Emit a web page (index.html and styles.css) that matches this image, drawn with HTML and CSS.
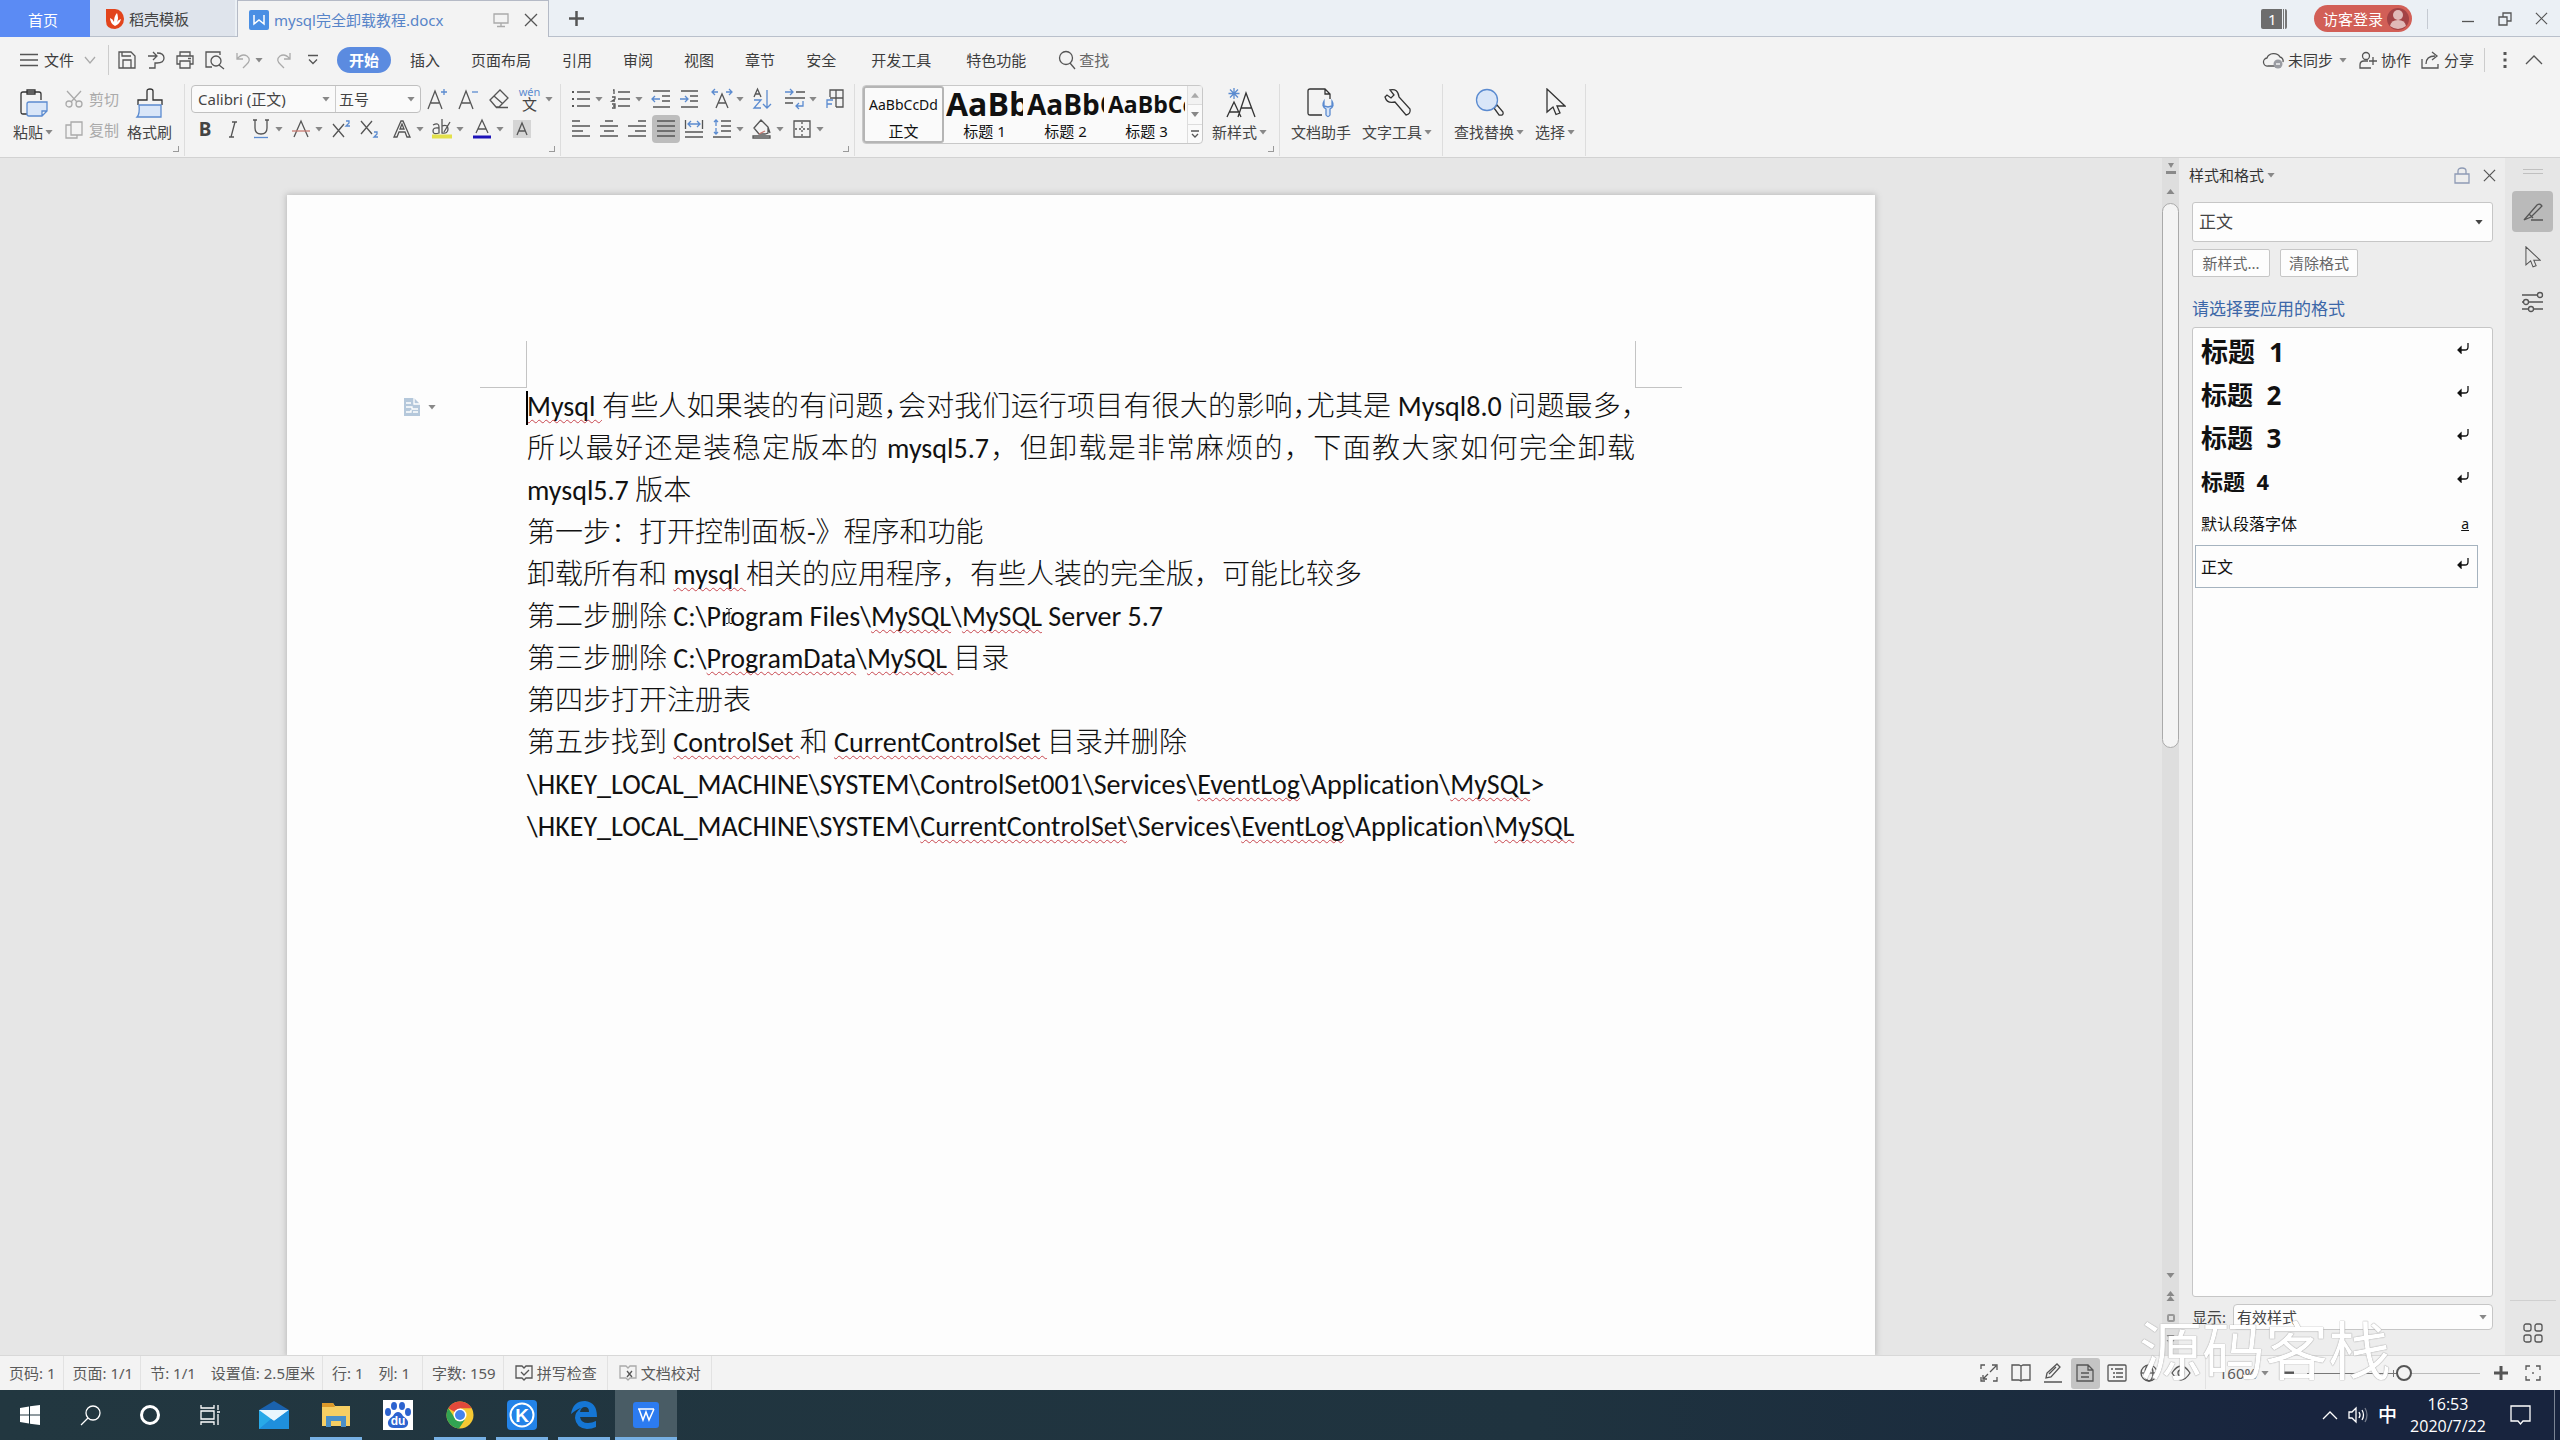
FILE: index.html
```html
<!DOCTYPE html>
<html lang="zh-CN">
<head>
<meta charset="utf-8">
<title>mysql完全卸载教程.docx</title>
<link rel="stylesheet" href="styles.css">
</head>
<body>
<svg class="defs" aria-hidden="true">
  <symbol id="x" viewBox="0 0 14 14"><path d="M1 1l12 12M13 1L1 13"/></symbol>
  <symbol id="ret" viewBox="0 0 12 12"><path d="M11 1v4q0 3-3 3H2" fill="none"/><path d="M4 5L1 8l3 3z" fill="#111"/></symbol>
  <symbol id="arrow" viewBox="0 0 20 28"><path d="M1 1v23l6-5 3 7.500 4-1.500-3-7h8z"/></symbol>
</svg>

<header class="titlebar">
  <button class="home-tab">首页</button>
  <button class="doc-tab shell">
    <svg class="plain" width="18" height="20" viewBox="0 0 18 20"><path d="M0 0h9a9 10 0 0 1 0 20q-9 0-9-8z" fill="#e2441c"/><path d="M9 17q-5-3-5-8 3 1 4 4 0-6 3-9 2 5 0 9 1-2 4-3-1 5-6 7z" fill="#fff"/></svg>
    <span>稻壳模板</span>
  </button>
  <div class="doc-tab active">
    <svg class="plain" width="20" height="20" viewBox="0 0 20 20"><rect width="20" height="20" rx="2" fill="#4a8fe4"/><path d="M5 5v9l5-4 5 4V5" fill="none" stroke="#fff" stroke-width="1.500"/></svg>
    <span class="doc-name">mysql完全卸载教程.docx</span>
    <button class="bare faint" aria-label="窗口"><svg width="16" height="16" viewBox="0 0 16 16"><path d="M1 2h14v9H1zM8 11v3M4 14.500h8"/></svg></button>
    <button class="bare" aria-label="关闭"><svg width="14" height="14"><use href="#x"/></svg></button>
  </div>
  <button class="bare plus" aria-label="新建"><svg width="15" height="15" viewBox="0 0 15 15"><path d="M7.500 0v15M0 7.500h15" stroke-width="2.500"/></svg></button>
  <div class="window-tools">
    <span class="count">1</span>
    <button class="login">访客登录
      <svg class="plain" width="22" height="22" viewBox="0 0 22 22"><circle cx="11" cy="11" r="11" fill="#a34245"/><circle cx="11" cy="7" r="5" fill="#e0b9b8"/><path d="M3 18q1-6 8-6t8 6q-8 6-16 0z" fill="#e0b9b8"/></svg>
    </button>
    <div class="win-buttons">
      <button class="bare" aria-label="最小化"><svg width="14" height="14" viewBox="0 0 14 14"><path d="M1 9.500h12"/></svg></button>
      <button class="bare" aria-label="还原"><svg width="14" height="14" viewBox="0 0 14 14"><path d="M1 5h8v8H1zM5 5V1h8v8H9"/></svg></button>
      <button class="bare" aria-label="关闭窗口"><svg width="13" height="13"><use href="#x"/></svg></button>
    </div>
  </div>
</header>

<nav class="menubar">
  <button class="file"><svg width="18" height="14" viewBox="0 0 18 14"><path d="M0 1.500h18M0 7h18M0 12.500h18"/></svg>文件<svg class="faint" width="12" height="8" viewBox="0 0 12 8"><path d="M1 1l5 6 5-6"/></svg></button>
  <div class="quick">
    <button class="bare" aria-label="保存"><svg width="18" height="18" viewBox="0 0 18 18"><path d="M1 17V1h12l4 4v12zM4 1v4h9M5 17V9h8v8"/></svg></button>
    <button class="bare" aria-label="输出"><svg width="18" height="18" viewBox="0 0 18 18"><path d="M1 5h8M6 1l4 4-4 4M10 2q7 0 7 5t-7 5H8v5H2"/></svg></button>
    <button class="bare" aria-label="打印"><svg width="18" height="18" viewBox="0 0 18 18"><path d="M4 5V1h10v4M4 13H1V5h16v8h-3M4 10h10v7H4zM12 7.500h3"/></svg></button>
    <button class="bare" aria-label="打印预览"><svg width="20" height="18" viewBox="0 0 20 18"><path d="M7 16H1V1h14v3M14 14l5 4"/><circle cx="11" cy="10" r="5"/></svg></button>
    <button class="bare pair faint" aria-label="撤销"><svg width="15" height="16" viewBox="0 0 15 16"><path d="M1 1v6h6M1 7q5-6 10-3 5 4-1 9l-3 3"/></svg><i class="caret"></i></button>
    <button class="bare faint" aria-label="恢复"><svg width="15" height="16" viewBox="0 0 15 16"><path d="M14 1v6H8M14 7Q9 1 4 4q-5 4 1 9l3 3"/></svg></button>
    <button class="bare" aria-label="自定义"><svg width="10" height="12" viewBox="0 0 10 12"><path d="M0 1.500h10M1 5.500l4 4 4-4"/></svg></button>
  </div>
  <div class="tabs">
    <button class="tab on">开始</button><button class="tab">插入</button><button class="tab">页面布局</button><button class="tab">引用</button><button class="tab">审阅</button><button class="tab">视图</button><button class="tab">章节</button><button class="tab">安全</button><button class="tab wide">开发工具</button><button class="tab wide">特色功能</button>
    <button class="find"><svg width="18" height="20" viewBox="0 0 18 20"><circle cx="8" cy="8" r="6.500"/><path d="M12 13l5 6"/></svg>查找</button>
  </div>
  <div class="share">
    <button><svg width="21" height="18" viewBox="0 0 21 18"><path d="M14 15H5a4 4 0 0 1-1-8 7 6 0 0 1 13-1 4 4 0 0 1 3 5"/><circle cx="15" cy="13" r="4.500" fill="#9a9ca2" stroke="none"/><path d="M13 13h4" stroke="#fff"/></svg>未同步<i class="caret"></i></button>
    <button><svg width="18" height="18" viewBox="0 0 18 18"><circle cx="7" cy="5" r="3.500"/><path d="M12 17H1v-3q0-4 4-4h4M14 6v8M10 10h8"/></svg><span>协作</span></button>
    <button><svg width="19" height="18" viewBox="0 0 19 18"><path d="M1 8v9h16v-4M5 13q0-8 9-8M11 1l5 4-5 4"/></svg><span>分享</span></button>
    <button class="bare dots" aria-label="更多"><svg width="4" height="18" viewBox="0 0 4 18"><path d="M2 1v3M2 7.500v3M2 14v3" stroke-width="3"/></svg></button>
    <button class="bare" aria-label="收起"><svg width="18" height="10" viewBox="0 0 18 10"><path d="M1 9l8-8 8 8"/></svg></button>
  </div>
</nav>

<section class="ribbon">
  <div class="group clip">
    <button class="big"><svg width="28" height="30" viewBox="0 0 28 30"><path d="M7 26H3q-2 0-2-2V6q0-2 2-2h16q2 0 2 2v6M7 6V2h8v4z"/><path class="blue" d="M9 14h18v9l-5 5H9q-2 0-2-2V16q0-2 2-2zM27 23h-5v5" /></svg><span>粘贴<i class="caret"></i></span></button>
    <div class="stack faint">
      <button><svg width="18" height="18" viewBox="0 0 18 18"><circle cx="4" cy="14" r="3"/><circle cx="14" cy="14" r="3"/><path d="M2 1l10 11M16 1L6 12"/></svg>剪切</button>
      <button><svg width="18" height="18" viewBox="0 0 18 18"><path d="M6 1h11v13H6zM6 4H1v13h11v-3"/></svg>复制</button>
    </div>
    <button class="big"><svg width="28" height="30" viewBox="0 0 28 30"><path d="M2 17v-5h9V3q0-2 3-2t3 2v9h9v5"/><path class="blue" d="M3 17h22v12H1q3-3 2-12z"/></svg><span>格式刷</span></button>
    <i class="corner"></i>
  </div>
  <div class="group font">
    <div class="row">
      <div class="combo">
        <label class="pick face"><select aria-label="字体"><option>Calibri (正文)</option></select><i class="caret"></i></label>
        <label class="pick size"><select aria-label="字号"><option>五号</option></select><i class="caret"></i></label>
      </div>
      <button class="ib w" aria-label="增大字号"><svg width="20" height="22" viewBox="0 0 20 22"><path d="M1 21L8 3l7 18M4 15h8"/><path class="bl" d="M17 1v6M14 4h6"/></svg></button>
      <button class="ib w" aria-label="减小字号"><svg width="20" height="22" viewBox="0 0 20 22"><path d="M1 21L8 3l7 18M4 15h8"/><path class="bl" d="M14 4h6"/></svg></button>
      <button class="ib w" aria-label="清除格式"><svg width="20" height="20" viewBox="0 0 20 20"><path d="M1 11L11 1l8 8-9 9H7zM5 7l9 8M7 18.500h12"/></svg></button>
      <button class="ib w pinyin" aria-label="拼音指南"><small>wén</small><b>文</b></button><i class="caret"></i>
    </div>
    <div class="row">
      <button class="ib letter strong">B</button>
      <button class="ib" aria-label="倾斜"><svg width="10" height="17" viewBox="0 0 10 17"><path d="M4 1h5M1 16h5M7 1L3 16"/></svg></button>
      <button class="ib" aria-label="下划线"><svg width="16" height="20" viewBox="0 0 16 20"><path d="M2 1v8q0 6 6 6t6-6V1M0 1h4M12 1h4"/><path class="bl" d="M1 18.500h14"/></svg></button><i class="caret"></i>
      <button class="ib" aria-label="删除线"><svg width="18" height="18" viewBox="0 0 18 18"><path d="M2 17L9 1l7 16"/><path d="M0 11h18" stroke="#c77a72"/></svg></button><i class="caret"></i>
      <button class="ib" aria-label="上标"><svg width="18" height="18" viewBox="0 0 18 18"><path d="M1 4l11 13M12 4L1 17"/><path class="bl" d="M14 1h3v2l-3 3h4"/></svg></button>
      <button class="ib" aria-label="下标"><svg width="18" height="18" viewBox="0 0 18 18"><path d="M1 1l11 13M12 1L1 14"/><path class="bl" d="M14 12h3v2l-3 3h4"/></svg></button>
      <button class="ib gap" aria-label="文字效果"><svg width="18" height="18" viewBox="0 0 18 18"><path d="M1 17L8 1h2l7 16h-3l-2-5H6l-2 5zM7 9l2-5 2 5z"/></svg></button><i class="caret"></i>
      <button class="ib" aria-label="突出显示"><svg width="20" height="22" viewBox="0 0 20 22"><path d="M1 7q6-3 6 2v6q-6 2-6-2t6-3M10 1v14q6 1 6-4t-6-3M18 4l-6 10"/><path d="M0 18.500h20" stroke="#e3e04a" stroke-width="4"/></svg></button><i class="caret"></i>
      <button class="ib" aria-label="字体颜色"><svg width="18" height="20" viewBox="0 0 18 20"><path d="M3 14L9 1l6 13M5 10h8"/><path d="M0 18h18" stroke="#1c12b8" stroke-width="3"/></svg></button><i class="caret"></i>
      <button class="ib" aria-label="字符底纹"><svg width="18" height="18" viewBox="0 0 18 18"><path d="M0 0h18v18H0z" fill="#d5d5d5" stroke="none"/><path d="M4 15L9 3l5 12M6 11h6"/></svg></button>
    </div>
    <i class="corner"></i>
  </div>
  <div class="group para">
    <div class="row">
      <button class="ib" aria-label="项目符号"><svg width="18" height="18" viewBox="0 0 18 18"><path d="M5 2h13M5 9h13M5 16h13"/><path d="M0 2h2M0 9h2M0 16h2" stroke-width="2"/></svg></button><i class="caret"></i>
      <button class="ib" aria-label="编号"><svg width="18" height="20" viewBox="0 0 18 20"><path d="M6 3h12M6 10h12M6 17h12M1 1h1v4M0 8h3v2l-3 2h3M0 15h3v4H0M1 17h2"/></svg></button><i class="caret"></i>
      <button class="ib" aria-label="减少缩进"><svg width="18" height="18" viewBox="0 0 18 18"><path d="M1 1h17M10 6h8M10 11h8M1 17h17"/><path class="bl" d="M8 9H0M3 6L0 9l3 3"/></svg></button>
      <button class="ib" aria-label="增加缩进"><svg width="18" height="18" viewBox="0 0 18 18"><path d="M1 1h17M10 6h8M10 11h8M1 17h17"/><path class="bl" d="M0 9h8M5 6l3 3-3 3"/></svg></button>
      <button class="ib gap" aria-label="中文版式"><svg width="20" height="20" viewBox="0 0 20 20"><path d="M4 19l6-14 6 14M6 14h8"/><path class="bl" d="M6 3H0M3 0L0 3l3 3M14 3h6M17 0l3 3-3 3"/></svg></button><i class="caret"></i>
      <button class="ib" aria-label="排序"><svg width="18" height="20" viewBox="0 0 18 20"><path d="M1 8l3.500-8L8 8M2 5h5"/><path class="bl" d="M1 11h7l-7 8h7M14 1v18M10 15l4 4 4-4"/></svg></button>
      <button class="ib gap" aria-label="制表位"><svg width="20" height="20" viewBox="0 0 20 20"><path d="M11 3h9M0 9h20M0 14h8"/><path class="bl" d="M0 3h8M5 0l3 3-3 3M18 12v5h-7M14 14l-3 3 3 3"/></svg></button><i class="caret"></i>
      <button class="ib" aria-label="表格"><svg width="18" height="20" viewBox="0 0 18 20"><path d="M4 8V1h13v17h-7M4 9h13M10 1v17"/><path class="bl" d="M1 19v-8h6M1 15h5"/></svg></button>
    </div>
    <div class="row">
      <button class="ib" aria-label="左对齐"><svg width="18" height="18" viewBox="0 0 18 18"><path d="M0 1h8M0 6h18M0 11h11M0 16h18"/></svg></button>
      <button class="ib" aria-label="居中"><svg width="18" height="18" viewBox="0 0 18 18"><path d="M5 1h8M0 6h18M4 11h10M0 16h18"/></svg></button>
      <button class="ib" aria-label="右对齐"><svg width="18" height="18" viewBox="0 0 18 18"><path d="M10 1h8M0 6h18M7 11h11M0 16h18"/></svg></button>
      <button class="ib pressed" aria-label="两端对齐"><svg width="18" height="18" viewBox="0 0 18 18"><path d="M0 1h18M0 6h18M0 11h18M0 16h18"/></svg></button>
      <button class="ib" aria-label="分散对齐"><svg width="18" height="18" viewBox="0 0 18 18"><path d="M.5 0v9M17.500 0v9M0 12h18M0 17h18"/><path class="bl" d="M3 4h12M6 1L3 4l3 3M12 1l3 3-3 3"/></svg></button>
      <button class="ib" aria-label="行距"><svg width="18" height="18" viewBox="0 0 18 18"><path d="M8 1h10M8 6h10M8 11h10M0 17h18"/><path class="bl" d="M3 0v6M1 2l2-2 2 2M3 8v6M1 12l2 2 2-2"/></svg></button><i class="caret"></i>
      <button class="ib" aria-label="底纹"><svg width="20" height="20" viewBox="0 0 20 20"><path d="M2 9l7-8 7 7v6l-3 1H7zM16 8l2 6M1 17h17v2H1z"/><path d="M7 15l6-3" stroke="#c77a72"/></svg></button><i class="caret"></i>
      <button class="ib" aria-label="边框"><svg width="18" height="18" viewBox="0 0 18 18"><path d="M1 1h16v16H1z"/><path d="M9 2v14M2 9h14" stroke-dasharray="2 2"/></svg></button><i class="caret"></i>
    </div>
    <i class="corner"></i>
  </div>
  <div class="group styles">
    <div class="gallery">
      <button class="style chosen"><span class="s0">AaBbCcDd</span>正文</button>
      <button class="style"><span class="s1">AaBb</span>标题 1</button>
      <button class="style"><span class="s2">AaBbC</span>标题 2</button>
      <button class="style"><span class="s3">AaBbCc</span>标题 3</button>
      <div class="spin"><button class="off" aria-label="上"><i class="caret up"></i></button><button aria-label="下"><i class="caret"></i></button><button aria-label="展开"><svg width="8" height="8" viewBox="0 0 8 8"><path d="M0 1h8M1 4l3 3 3-3"/></svg></button></div>
    </div>
    <button class="big newstyle"><svg width="30" height="30" viewBox="0 0 30 30"><path d="M1 29l7-15 7 15M3 24h9M12 29l8-24 9 24M15 20h11"/><path class="bl" d="M8 0v11M2.500 5.500h11M4 1.500l8 8M12 1.500l-8 8"/></svg><span>新样式<i class="caret"></i></span></button>
    <i class="corner"></i>
  </div>
  <div class="group tools">
    <button class="big"><svg width="28" height="30" viewBox="0 0 28 30"><path d="M15 27H3q-2 0-2-2V3q0-2 2-2h15l5 5v5M18 1v5h5"/><path class="blue" d="M17 13q-3 5 2 8v6q2 3 4 0v-6q5-3 2-8v5l-4 1-4-1z"/></svg><span>文档助手</span></button>
    <button class="big"><svg width="28" height="28" viewBox="0 0 28 28"><path d="M6 2q8-2 9 7l11 12q1 5-4 6L11 14Q3 16 1 9l2-2 4 3 3-3z"/></svg><span>文字工具<i class="caret"></i></span></button>
  </div>
  <div class="group search">
    <button class="big"><svg width="30" height="30" viewBox="0 0 30 30"><path d="M19 20l3-3 6 7q1 4-4 3z"/><circle class="blue" cx="12" cy="12" r="10.500"/></svg><span>查找替换<i class="caret"></i></span></button>
    <button class="big"><svg width="20" height="28"><use href="#arrow"/></svg><span>选择<i class="caret"></i></span></button>
  </div>
</section>

<main class="workspace">
  <div class="canvas">
    <article class="paper">
      <i class="crop left"></i><i class="crop right"></i>
      <button class="smart" aria-label="段落布局"><svg class="plain" width="16" height="18" viewBox="0 0 16 18"><path d="M0 0h10l6 6v12H0z" fill="#b5c8db"/><path d="M2 5h5M2 9h6v2h6M2 14h5v-2M9 14h5M10 0v6h6" fill="none" stroke="#fff"/></svg><i class="caret"></i></button>
      <p><span class="full"><u>Mysql </u>有些人如果装的有问题<b class="half">，</b>会对我们运行项目有很大的影响<b class="half">，</b>尤其是 Mysql8.0 问题最多<b class="half">，</b></span>
      <span class="full">所以最好还是装稳定版本的 mysql5.7，但卸载是非常麻烦的，下面教大家如何完全卸载</span>
      mysql5.7 版本</p>
      <p>第一步：打开控制面板-》程序和功能</p>
      <p>卸载所有和 <u>mysql </u>相关的应用程序，有些人装的完全版，可能比较多</p>
      <p>第二步删除 C:\Program Files\<u>MySQL</u>\<u>MySQL</u> Server 5.7</p>
      <p>第三步删除 C:\<u>ProgramData</u>\<u>MySQL </u>目录</p>
      <p>第四步打开注册表</p>
      <p>第五步找到 <u>ControlSet </u>和 <u>CurrentControlSet </u>目录并删除</p>
      <p>\HKEY_LOCAL_MACHINE\SYSTEM\ControlSet001\Services\<u>EventLog</u>\Application\<u>MySQL</u>&gt;</p>
      <p>\HKEY_LOCAL_MACHINE\SYSTEM\<u>CurrentControlSet</u>\Services\<u>EventLog</u>\Application\<u>MySQL</u></p>
      <i class="text-cursor"></i>
      <svg class="ibeam" width="8" height="16" viewBox="0 0 8 16"><path d="M1 .5h2l1 1 1-1h2M1 15.500h2l1-1 1 1h2M4 1v14"/></svg>
    </article>
  </div>

  <div class="scroll">
    <svg class="plain" width="10" height="12" viewBox="0 0 10 12"><path d="M2 0h6L5 5zM0 8h10v3H0z" fill="#8a8a8a"/></svg>
    <i class="caret up"></i>
    <div class="track"><div class="thumb"></div></div>
    <i class="caret"></i>
    <span><i class="caret up"></i><i class="caret up"></i></span>
    <i class="square"></i>
    <span><i class="caret"></i><i class="caret"></i></span>
  </div>

  <aside class="pane">
    <div class="pane-head"><button class="pane-title">样式和格式<i class="caret"></i></button>
      <button class="bare lock" aria-label="锁定"><svg width="16" height="17" viewBox="0 0 16 17"><path d="M1 7h14v9H1zM4 7V4q0-3 4-3t4 3v3"/></svg></button>
      <button class="bare" aria-label="关闭窗格"><svg width="13" height="13"><use href="#x"/></svg></button></div>
    <label class="pick current"><select aria-label="当前样式"><option>正文</option></select><i class="caret dark"></i></label>
    <div class="pane-buttons"><button>新样式...</button><button>清除格式</button></div>
    <h2>请选择要应用的格式</h2>
    <ul class="list">
      <li class="h1"><span>标题&nbsp; 1</span><svg width="12" height="12"><use href="#ret"/></svg></li>
      <li class="h2"><span>标题&nbsp; 2</span><svg width="12" height="12"><use href="#ret"/></svg></li>
      <li class="h2"><span>标题&nbsp; 3</span><svg width="12" height="12"><use href="#ret"/></svg></li>
      <li class="h4"><span>标题&nbsp; 4</span><svg width="12" height="12"><use href="#ret"/></svg></li>
      <li class="default"><span>默认段落字体</span><em>a</em></li>
      <li class="sel"><span>正文</span><svg width="12" height="12"><use href="#ret"/></svg></li>
    </ul>
    <div class="show"><label for="show">显示:</label><div class="pick"><select id="show"><option>有效样式</option></select><i class="caret"></i></div></div>
  </aside>

  <div class="rail">
    <i class="grip"></i>
    <button class="on" aria-label="样式和格式"><svg width="22" height="20" viewBox="0 0 22 20"><path d="M2 18L15 3q3-2 5 1L9 15zM7 12l4 4M9 18h12"/></svg></button>
    <button aria-label="选择"><svg width="16" height="22"><use href="#arrow"/></svg></button>
    <button aria-label="设置"><svg width="22" height="20" viewBox="0 0 22 20"><path d="M0 3h16M0 17h6M11 17h10M0 10h2M7 10h14"/><circle cx="18" cy="3" r="2.500"/><circle cx="4" cy="10" r="2.500"/><circle cx="9" cy="17" r="2.500"/></svg></button>
    <button class="apps" aria-label="应用"><svg width="20" height="20" viewBox="0 0 20 20"><rect x="1" y="1" width="7" height="7" rx="2"/><rect x="12" y="1" width="7" height="7" rx="2"/><rect x="1" y="12" width="7" height="7" rx="2"/><rect x="12" y="12" width="7" height="7" rx="2"/></svg></button>
  </div>
</main>

<footer class="status">
  <div class="facts">
    <span class="cell">页码: 1</span><span class="cell">页面: 1/1</span><span class="cell">节: 1/1<span>设置值: 2.5厘米</span></span><span class="cell place">行: 1<span>列: 1</span></span><span class="cell">字数: 159</span>
    <button class="cell"><svg width="18" height="16" viewBox="0 0 18 16"><path d="M9 15L7 13H1V1h6l2 2 2-2h6v12h-6zM6 7l3 3 5-5"/></svg>拼写检查</button>
    <button class="cell"><svg width="18" height="16" viewBox="0 0 18 16"><path d="M9 15L7 13H1V1h6l2 2 2-2h6v12h-6z" stroke="#aaa"/><path d="M8 6l5 6M13 6l-5 6"/></svg>文档校对</button>
  </div>
  <div class="views">
    <button aria-label="全屏"><svg width="18" height="18" viewBox="0 0 18 18"><path d="M1 5V1h4M1 13v4h4M13 17h4v-4M10 8l6-6M8 10l-5 5M12 1h5v5M3 11v4h4"/></svg></button>
    <button aria-label="阅读版式"><svg width="20" height="18" viewBox="0 0 20 18"><path d="M10 17V2M10 2l-2-1H1v15h7l2 1 2-1h7V1h-7z"/></svg></button>
    <button aria-label="写作模式"><svg width="20" height="20" viewBox="0 0 20 20"><path d="M3 15l1-5 10-9 3 3-9 10zM13 4L6 11M1 19h18"/></svg></button>
    <button class="on" aria-label="页面视图"><svg width="18" height="18" viewBox="0 0 18 18"><path d="M1 1h11l5 5v11H1zM12 1v5h5M5 9h8M5 13h8"/></svg></button>
    <button aria-label="大纲"><svg width="20" height="18" viewBox="0 0 20 18"><rect x="1" y="1" width="18" height="16" rx="1"/><path d="M4 5h2M8 5h8M6 9h2M9 9h7M6 13h2M9 13h7"/></svg></button>
    <button aria-label="Web版式"><svg width="18" height="18" viewBox="0 0 18 18"><circle cx="9" cy="9" r="8"/><ellipse cx="9" cy="9" rx="4" ry="8"/><path d="M1 9h16"/></svg></button>
    <button aria-label="护眼模式"><svg width="20" height="16" viewBox="0 0 20 16"><path d="M1 8q9-14 18 0-9 14-18 0z"/><circle cx="10" cy="8" r="3"/></svg></button>
  </div>
  <div class="zoom">
    <button class="percent">160%<i class="caret"></i></button>
    <button class="bare" aria-label="缩小"><svg width="14" height="14" viewBox="0 0 14 14"><path d="M0 7h14" stroke-width="3"/></svg></button>
    <input type="range" aria-label="缩放" min="0" max="100" value="57">
    <button class="bare" aria-label="放大"><svg width="14" height="14" viewBox="0 0 14 14"><path d="M0 7h14M7 0v14" stroke-width="3"/></svg></button>
    <button class="bare fit" aria-label="最佳显示比例"><svg width="16" height="16" viewBox="0 0 16 16"><path d="M1 5V1h4M11 1h4v4M1 11v4h4M11 15h4v-4M8 7v2"/></svg></button>
  </div>
</footer>

<div class="taskbar">
  <button class="sys" aria-label="开始"><svg class="plain" width="20" height="20" viewBox="0 0 20 20"><path d="M0 3l9-1.500V9.500H0zM10 1.300L20 0v9.500H10zM0 10.500h9v8L0 17zM10 10.500h10V20l-10-1.300z" fill="#fff"/></svg></button>
  <button class="sys" aria-label="搜索"><svg width="21" height="21" viewBox="0 0 21 21"><circle cx="13" cy="8" r="7"/><path d="M8 13l-7 7"/></svg></button>
  <button class="sys" aria-label="Cortana"><svg width="20" height="20" viewBox="0 0 20 20"><circle cx="10" cy="10" r="8.500" stroke-width="3"/></svg></button>
  <button class="sys last" aria-label="任务视图"><svg width="20" height="20" viewBox="0 0 20 20"><path d="M1 0v3h13V0M1 20v-3h13v3M1 6h13v8H1zM18 0v5M18 9v11M17 7h3"/></svg></button>
  <button class="app" aria-label="邮件"><svg class="plain" width="30" height="28" viewBox="0 0 30 28"><path d="M0 9L15 0l15 9v6H0z" fill="#1a62ae"/><path d="M0 9h30v19H0z" fill="#28a9e8"/><path d="M0 9h30L15 20z" fill="#e9f6fd"/><path d="M0 28l12-10 3 2 15-11v19z" fill="#1f8fdc"/></svg></button>
  <button class="app open" aria-label="资源管理器"><svg class="plain" width="28" height="24" viewBox="0 0 28 24"><path d="M0 0h11l2 3h15v20H0z" fill="#f6cf63"/><path d="M0 0h11l2 4H0z" fill="#dc9a2b"/><path d="M4 13h20v11h-5v-6H9v6H4z" fill="#4a90c8"/></svg></button>
  <button class="app" aria-label="百度"><svg class="plain" width="30" height="30" viewBox="0 0 30 30"><path d="M0 0h30v30H0z" fill="#fff"/><g fill="#2d63cf"><ellipse cx="5" cy="12" rx="3" ry="4"/><ellipse cx="11" cy="6" rx="3" ry="4"/><ellipse cx="19" cy="6" rx="3" ry="4"/><ellipse cx="25" cy="12" rx="3" ry="4"/><path d="M15 12q3 0 5 4 6 4 5 8t-6 4H11q-5 0-6-4t5-8q2-4 5-4z"/></g><text x="15" y="25" text-anchor="middle" class="du">du</text></svg></button>
  <button class="app open" aria-label="Chrome"><svg class="plain" width="28" height="28" viewBox="0 0 28 28"><circle cx="14" cy="14" r="13.500" fill="#f5c933"/><path d="M14 14L2.300 7.200A13.500 13.500 0 0 1 25.700 7.200H14z" fill="#e2493b"/><path d="M14 14l-3 6-8.700-12.800A13.500 13.500 0 0 0 13 27.500l6-9z" fill="#32a352"/><circle cx="14" cy="14" r="6.500" fill="#fff"/><circle cx="14" cy="14" r="5" fill="#4483ee"/></svg></button>
  <button class="app open" aria-label="K"><svg class="plain" width="30" height="30" viewBox="0 0 30 30"><rect width="30" height="30" rx="4" fill="#2383e8"/><circle cx="15" cy="15" r="11.500" fill="none" stroke="#fff" stroke-width="2"/><text x="15" y="22" text-anchor="middle" class="kk">K</text></svg></button>
  <button class="app open" aria-label="Edge"><svg class="plain" width="26" height="28" viewBox="0 0 26 28"><path d="M0 13Q2 0 14 0q12 1 12 16H9q1 6 8 6 4 0 8-2v6q-4 2-9 2-11-1-12-11 0-6 6-10-4 1-10 6zM9 11h9q0-5-4-5t-5 5z" fill="#1576d4"/></svg></button>
  <button class="app open current" aria-label="WPS文字"><svg class="plain" width="26" height="26" viewBox="0 0 26 26"><rect width="26" height="26" rx="3" fill="#2c7bf0"/><path d="M5 7h16M6 7l4 11 3-8 3 8 5-11" fill="none" stroke="#fff" stroke-width="1.500"/></svg></button>
  <div class="tray">
    <button aria-label="显示隐藏的图标"><svg width="16" height="10" viewBox="0 0 16 10"><path d="M1 9l7-7 7 7"/></svg></button>
    <button aria-label="音量"><svg width="20" height="16" viewBox="0 0 20 16"><path d="M1 5h3l4-4v14l-4-4H1zM11 5q2 3 0 6M14 3q3 5 0 10"/><path d="M17 1q4 7 0 14" opacity=".4"/></svg></button>
    <button class="ime">中</button>
    <time><span>16:53</span><span>2020/7/22</span></time>
    <button aria-label="通知"><svg width="21" height="21" viewBox="0 0 21 21"><path d="M1 1h19v15h-7l-2.500 3L8 16H1z"/></svg></button>
    <i class="desk"></i>
  </div>
</div>
<div class="watermark">源码客栈</div>
</body>
</html>
```

FILE: styles.css
```css
* { box-sizing: border-box; }

body {
  margin: 0;
  height: 100vh;
  display: flex;
  flex-direction: column;
  overflow: hidden;
  background: #f3f3f3;
  color: #444;
  font: 15px/20px "Noto Sans", "Noto Sans CJK SC", sans-serif;
}

button, select, input {
  font: inherit;
  color: inherit;
  background: none;
  border: 0;
  margin: 0;
  padding: 0;
}
button { white-space: nowrap; }
svg { display: block; flex: none; fill: none; stroke: #555; stroke-width: 1.3; overflow: visible; }
svg.plain { stroke: none; }
.defs { position: absolute; width: 0; height: 0; }
.blue { fill: #d9e6f8; stroke: #5b8bd0; }
.bl { stroke: #5b8bd0; }
.faint { color: #aaa; }
.faint svg, svg.faint { stroke: #aaa; }
.bare { display: flex; align-items: center; justify-content: center; }

.caret {
  flex: none;
  width: 12px;
  height: 5px;
  background: #888;
  clip-path: polygon(2px 0, 10px 0, 6px 5px);
}
.caret.up { clip-path: polygon(2px 5px, 10px 5px, 6px 0); }
.caret.dark { background: #444; }

/* title bar */
.titlebar {
  flex: none;
  height: 37px;
  display: flex;
  background: #ebf0f5;
  box-shadow: inset 0 -1px #b9c0cb;
}
.home-tab { width: 90px; background: #5b8bf4; color: #fff; padding: 2px 4px 0 0; }
.doc-tab { display: flex; align-items: center; padding-top: 2px; }
.shell { width: 145px; padding-left: 16px; gap: 5px; margin: 0 2px 1px 0; background: #dfe4ec; }
.active {
  width: 312px;
  padding-left: 11px;
  gap: 5px;
  background: #f3f3f3;
  border: solid #b5bac6;
  border-width: 1px 1px 0;
  color: #5784c8;
}
.doc-name { flex: 1; }
.active .bare { margin-right: 10px; }
.plus { width: 54px; }
.window-tools { margin-left: auto; display: flex; align-items: center; }
.count {
  width: 26px;
  height: 20px;
  margin-right: 12px;
  padding-left: 7px;
  border-radius: 2px;
  background: linear-gradient(90deg, #6d6d6d 21px, #ebf0f5 21px 22px, #777 22px 23px, #ebf0f5 23px 24px, #777 24px);
  color: #fff;
}
.login {
  display: flex;
  align-items: center;
  justify-content: space-between;
  width: 98px;
  height: 27px;
  padding: 0 3px 0 9px;
  margin: 0 15px;
  border-radius: 14px;
  background: #d25f57;
  color: #fff;
}
.win-buttons { display: flex; gap: 23px; padding: 0 12px 0 33px; height: 20px; border-left: 1px solid #c5cad2; }

/* menu bar */
.menubar { flex: none; height: 47px; display: flex; align-items: center; padding: 0 0 1px 20px; color: #3c3c3c; }
.file { display: flex; align-items: center; gap: 6px; height: 30px; padding-right: 12px; border-right: 1px solid #ccc; }
.file svg:last-child { margin-left: 4px; }
.quick { display: flex; align-items: center; gap: 11px; margin-left: 9px; width: 219px; }
.quick .pair { gap: 2px; }
.quick .bare:last-child { margin-left: 6px; }
.tabs { display: flex; align-items: center; }
.tab { padding: 3px 0; margin-right: 31px; }
.tab.wide { margin: 0 31px 0 4px; }
.tab.on { padding: 3px 12px; margin-right: 19px; border-radius: 13px; background: #5b8be0; color: #fff; font-weight: 700; }
.find { display: flex; align-items: center; gap: 3px; color: #666; margin-left: 1px; }
.share { margin-left: auto; display: flex; align-items: center; gap: 10px; padding-right: 17px; }
.share button { display: flex; align-items: center; gap: 4px; }
.share .dots { width: 40px; height: 24px; justify-content: center; border-left: 1px solid #ccc; margin-right: -9px; }

/* ribbon */
.ribbon { flex: none; height: 74px; display: flex; border-bottom: 1px solid #d2d2d2; }
.group { position: relative; display: flex; border-right: 1px solid #ddd; height: 72px; }
.corner { position: absolute; right: 5px; bottom: 4px; width: 6px; height: 6px; border: solid #999; border-width: 0 1px 1px 0; }
.big { display: flex; flex-direction: column; align-items: center; justify-content: space-between; padding: 4px 0 14px; height: 72px; }
.big svg { stroke: #333; }
.big span { display: flex; align-items: center; }
.clip { width: 185px; padding-left: 13px; }
.stack { display: flex; flex-direction: column; gap: 11px; padding-top: 5px; margin: 0 8px 0 10px; }
.stack button { display: flex; align-items: center; gap: 6px; }
.font, .para { flex-direction: column; padding: 0 0 0 6px; }
.font { width: 376px; }
.para { width: 294px; }
.row { display: flex; align-items: center; height: 30px; }
.combo { display: flex; width: 230px; height: 28px; border: 1px solid #c0c0c0; border-radius: 4px; background: #fafafa; }
.pick { display: grid; align-items: center; }
.pick > * { grid-area: 1 / 1; }
.pick select { appearance: none; width: 100%; padding: 0 6px; }
.pick > .caret { justify-self: end; margin-right: 3px; pointer-events: none; }
.face { width: 144px; border-right: 1px solid #ccc; }
.size { flex: 1; }
.size select { padding: 0 3px; }
.ib { flex: none; width: 28px; height: 28px; display: flex; align-items: center; justify-content: center; border-radius: 4px; }
.ib.w { width: 31px; }
.gap { margin-left: 5px; }
.ib + .caret { margin-left: -2px; margin-right: 2px; }
.ib.pressed { background: #bdbdbd; margin-left: 1px; }
.letter { font-size: 19px; }
.strong { font-weight: 700; }
.pinyin { flex-direction: column; }
.pinyin small { font-size: 11px; line-height: 9px; color: #5b8bd0; }
.pinyin b { font-weight: 400; line-height: 16px; }
.styles { width: 425px; padding: 1px 0 0 7px; }
.gallery { display: flex; width: 341px; height: 59px; border: 1px solid #c8c8c8; border-radius: 4px; background: #fafafa; }
.style { width: 81px; overflow: hidden; display: flex; flex-direction: column; align-items: center; justify-content: flex-end; padding-bottom: 2px; color: #111; }
.style span { flex: 1; width: 77px; overflow: hidden; display: flex; align-items: center; font-family: "Open Sans", sans-serif; font-weight: 700; line-height: 30px; }
.style.chosen { border: 2px solid #b5b5b5; border-radius: 3px; padding-bottom: 0; }
.style .s0 { font-size: 14px; font-weight: 400; justify-content: center; font-family: "Noto Sans", sans-serif; }
.s1 { font-size: 32px; }
.s2 { font-size: 28px; }
.s3 { font-size: 23px; }
.spin { flex: 1; display: flex; flex-direction: column; border-left: 1px solid #ddd; }
.spin button { flex: 1; display: flex; align-items: center; justify-content: center; }
.spin button + button { border-top: 1px solid #ddd; }
.spin .off { background: #f0f0f0; opacity: .7; }
.newstyle { margin: -1px 0 0 9px; }
.tools { width: 163px; padding-left: 11px; gap: 11px; }
.search { width: 143px; padding-left: 11px; gap: 9px; }

/* work area */
.workspace { flex: 1; min-height: 0; display: flex; background: #e6e6e6; }
.canvas { flex: 1; min-width: 0; overflow: hidden; display: flex; justify-content: center; padding-top: 37px; }
.paper {
  position: relative;
  width: 1588px;
  min-height: 1161px;
  padding: 191px 240px 0;
  background: #fdfdfd;
  box-shadow: 0 0 6px 1px #bbb;
  color: #111;
  font-family: Carlito, Lato, "Noto Sans CJK SC", sans-serif;
  font-size: 28px;
  font-weight: 300;
  font-variant-ligatures: none;
  line-height: 42px;
}
.paper p { margin: 0; }
.full { display: block; text-align: justify; text-align-last: justify; }
.half { font-weight: inherit; font-feature-settings: "halt"; }
.paper u { text-decoration: underline wavy #c8474f 1px; text-underline-offset: 3px; text-decoration-skip-ink: none; }
.crop { position: absolute; top: 146px; width: 47px; height: 47px; border: solid #c4c4c4; }
.crop.left { left: 193px; border-width: 0 1px 1px 0; }
.crop.right { right: 193px; border-width: 0 0 1px 1px; }
.smart { position: absolute; left: 117px; top: 203px; display: flex; align-items: center; gap: 6px; }
.text-cursor { position: absolute; left: 239px; top: 196px; width: 2px; height: 34px; background: #000; }
.ibeam { position: absolute; left: 438px; top: 413px; stroke: #222; stroke-width: 1; }

.scroll { width: 17px; display: flex; flex-direction: column; align-items: center; gap: 13px; padding: 5px 0 10px; background: #dedede; }
.scroll .track { flex: 1; align-self: stretch; margin: -4px 0 2px; }
.thumb { height: 545px; border: 1px solid #aaa; border-radius: 9px; background: #f4f4f4; }
.scroll > .caret { margin-top: 1px; }
.scroll span { display: flex; flex-direction: column; }
.square { width: 8px; height: 8px; border: 2px solid #999; border-radius: 2px; }

.pane { width: 326px; padding: 5px 12px 25px 13px; background: #ededed; display: flex; flex-direction: column; }
.pane-head { display: flex; align-items: center; gap: 13px; height: 24px; margin-right: -3px; }
.pane-title { display: flex; align-items: center; gap: 1px; margin: 0 auto 0 -3px; color: #333; }
.lock svg { stroke: #8f9bb5; }
.pick.current { height: 40px; margin-top: 15px; border: 1px solid #c6c6c6; border-radius: 3px; background: #fdfdfd; font-size: 17px; }
.current .caret { margin-right: 7px; }
.pane-buttons { display: flex; gap: 10px; margin-top: 7px; }
.pane-buttons button { width: 78px; height: 28px; border: 1px solid #c6c6c6; border-radius: 2px; background: #fdfdfd; color: #666; }
.pane h2 { margin: 20px 0 6px; font-size: 17px; line-height: 24px; font-weight: 400; color: #3c67a8; }
.list { flex: 1; margin: 0; padding: 2px 14px 0 2px; list-style: none; border: 1px solid #c6c6c6; border-radius: 3px; background: #fdfdfd; color: #111; }
.list li { display: flex; align-items: center; justify-content: space-between; height: 43px; padding: 0 8px 0 5px; border: 1px solid transparent; font-weight: 700; }
.list svg { stroke: #111; margin-bottom: 8px; }
.list .h1 { font-size: 27px; }
.list .h2 { font-size: 26px; }
.list .h4 { font-size: 22px; }
.list .default, .list .sel { font-size: 16px; font-weight: 400; }
.list .sel { border-color: #a5b3bf; }
.list em { font-style: normal; text-decoration: underline; font-size: 14px; }
.show { display: flex; align-items: center; gap: 7px; margin-top: 7px; }
.show .pick { flex: 1; height: 26px; border: 1px solid #c6c6c6; border-radius: 4px; background: #fdfdfd; }
.show select { padding: 0 3px; }

.rail { width: 55px; display: flex; flex-direction: column; align-items: center; padding: 11px 0 0; background: #e6e6e6; }
.grip { width: 20px; height: 5px; border: solid #c0c0c0; border-width: 1px 0; }
.rail button { width: 41px; height: 45px; display: flex; align-items: center; justify-content: center; }
.rail .on { height: 41px; margin: 17px 0 2px; border-radius: 4px; background: #bababa; }
.rail .apps { width: 46px; height: 55px; margin-top: auto; border-top: 1px solid #d0d0d0; align-items: flex-start; padding-top: 22px; }

/* status bar */
.status { flex: none; height: 35px; display: flex; align-items: center; border-top: 1px solid #d8d8d8; color: #5a5a5a; }
.facts { display: flex; }
.cell { display: flex; align-items: center; gap: 4px; height: 35px; padding: 0 7px 0 9px; border-right: 1px solid #e2e2e2; }
.cell > span { margin-left: 11px; }
.cell.place { padding-right: 12px; }
button.cell { padding: 0 10px 0 11px; }
.views { margin-left: auto; display: flex; gap: 3px; padding-right: 9px; border-right: 1px solid #e2e2e2; }
.views button { width: 29px; height: 31px; display: flex; align-items: center; justify-content: center; border-radius: 3px; }
.views .on { background: #c4c4c4; }
.zoom { display: flex; align-items: center; padding: 0 19px 0 13px; }
.percent { display: flex; align-items: center; gap: 2px; margin-right: 9px; }
.zoom input {
  appearance: none;
  width: 173px;
  height: 18px;
  margin: 0 14px 0 13px;
  background: linear-gradient(90deg, #777 57%, #bbb 57%) center / 100% 1px no-repeat, linear-gradient(#777, #777) 86px center / 1px 7px no-repeat;
}
.zoom input::-webkit-slider-thumb { appearance: none; width: 16px; height: 16px; border: 2px solid #555; border-radius: 50%; background: #f3f3f3; }
.fit { margin-left: 17px; }

/* task bar */
.taskbar { flex: none; height: 50px; display: flex; background: linear-gradient(90deg, #223740, #1f333f 60%, #1b2c3e 78%, #18243e 90%); color: #fff; }
.taskbar svg { stroke: #fff; }
.taskbar svg.plain { stroke: none; }
.taskbar button { display: flex; align-items: center; justify-content: center; }
.sys { width: 60px; }
.sys.last { margin-right: 3px; }
.app { width: 62px; }
.app.open { background: linear-gradient(#76b0e4, #76b0e4) center bottom / 52px 3px no-repeat; }
.app.current { background: linear-gradient(#76b0e4, #76b0e4) center bottom / 62px 3px no-repeat, #495c65; }
.du { font: 700 12px "Liberation Sans", sans-serif; fill: #fff; }
.kk { font: 700 19px "Liberation Sans", sans-serif; fill: #fff; }
.tray { margin-left: auto; display: flex; align-items: center; gap: 10px; }
.ime { font-size: 19px; font-weight: 500; }
.tray time { display: flex; flex-direction: column; align-items: center; width: 76px; margin: 0 14px 0 3px; font: 16px/22px "Open Sans", sans-serif; }
.desk { width: 6px; height: 50px; margin-left: 13px; border-left: 1px solid #7b8494; }

.watermark {
  position: fixed;
  right: 169px;
  bottom: 61px;
  color: #fff;
  font: 400 63px/64px "Noto Sans CJK SC", sans-serif;
  text-shadow: 0 0 1px #999, 0 0 1px #999;
  pointer-events: none;
}
```
